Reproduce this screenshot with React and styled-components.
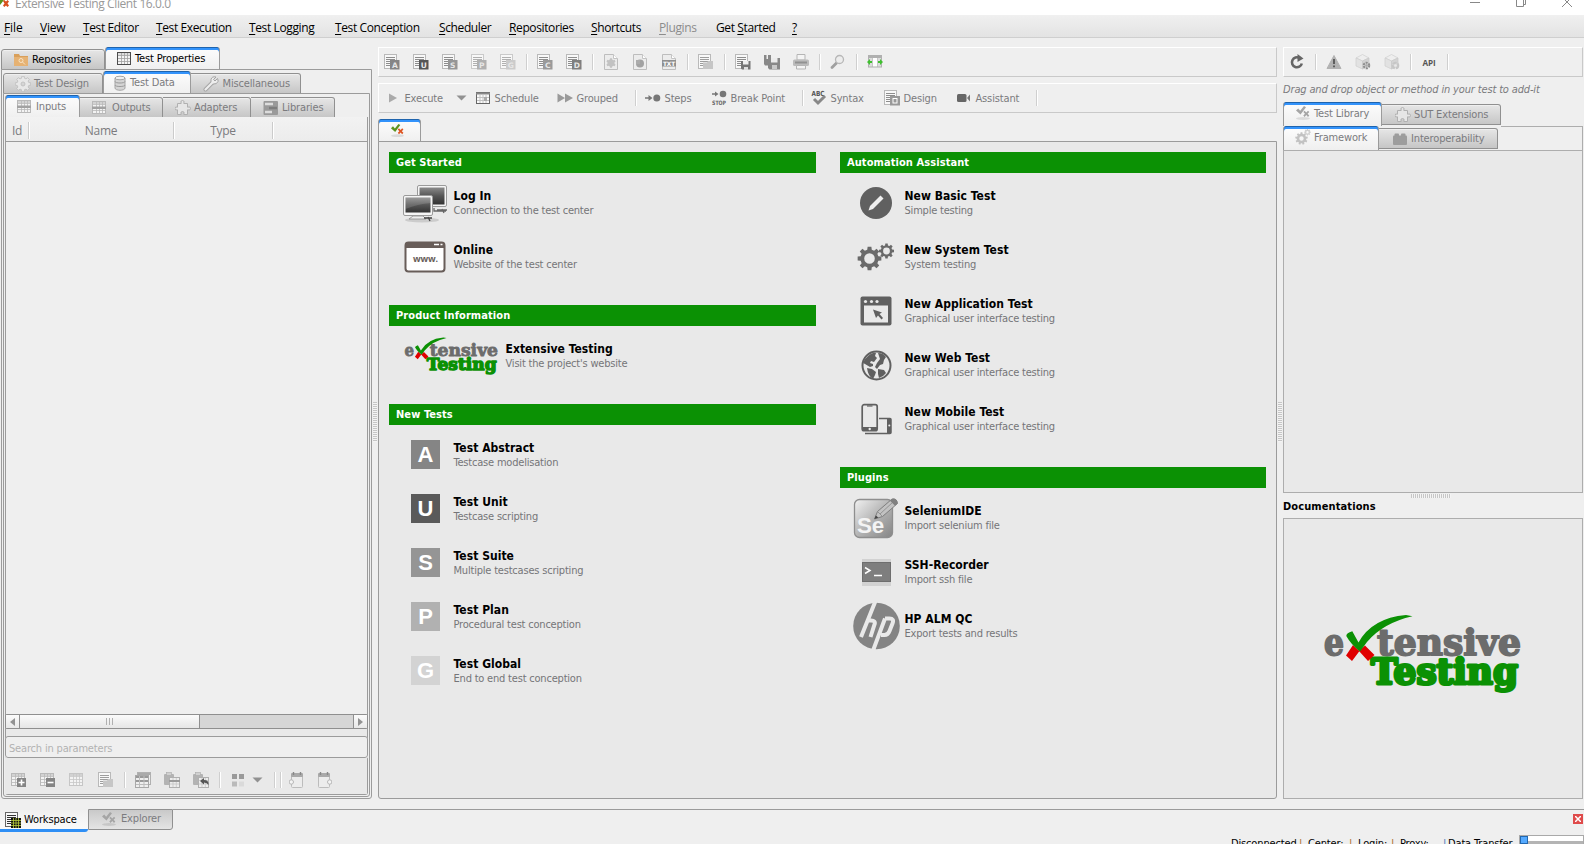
import React from "react";
import styled, { createGlobalStyle, css } from "styled-components";

const UI = '"DejaVu Sans Condensed", "DejaVu Sans", sans-serif';
const MENU = '"Open Sans", "Noto Sans", sans-serif';
const LINE = "#9b9b9b";
const GREEN = "#0b9104";

const Global = createGlobalStyle`
  * { box-sizing: border-box; }
  html, body { margin: 0; height: 844px; overflow: hidden; }
  body { background: #efefef; font: 11px/14px ${UI}; letter-spacing: -0.15px; color: #7b7b7e; white-space: nowrap; }
  svg { display: block; flex: none; }
`;

/* ---------- window chrome ---------- */
const Window = styled.div`
  width: 1584px; height: 844px; overflow: hidden; display: flex; flex-direction: column; background: #efefef;
`;
const TitleBar = styled.header`
  height: 15px; flex: none; background: #fff; display: flex; align-items: flex-start; overflow: hidden;
`;
const TitleText = styled.span`
  margin: -5px auto 0 6px; font: 12px/17px ${MENU}; letter-spacing: -0.4px; color: #999;
`;
const WindowButtons = styled.div`
  display: flex; gap: 34px; padding-right: 11px;
`;
const MenuBar = styled.nav`
  height: 23px; flex: none; display: flex; align-items: center; padding: 3px 0 0 4px;
  background: linear-gradient(#f0f0f0, #e3e3e3); border-bottom: 1px solid #cfcfcf;
`;
const MenuItem = styled.span`
  width: ${(p) => p.$w}px; flex: none; font: 12px/17px ${MENU}; letter-spacing: ${(p) => p.$ls || -0.38}px;
  color: ${(p) => (p.$off ? "#8c8c8c" : "#000")};
  u { text-underline-offset: 2px; }
`;
const Body = styled.main`
  height: 771px; flex: none; display: flex; padding: 9px 1px 10px 1px;
`;
const Column = styled.section`
  width: ${(p) => p.$w}px; flex: none; display: flex; flex-direction: column;
`;
const Gutter = styled.div`
  width: ${(p) => p.$w}px; flex: none; display: flex; align-items: center; justify-content: center; padding-bottom: 2px;
`;
const Grip = styled.div`
  ${(p) => p.$flat
    ? css`width: 40px; height: 4px; background: repeating-linear-gradient(90deg, #c6c6c6 0 1px, #f4f4f4 1px 2px);`
    : css`width: 4px; height: 40px; background: repeating-linear-gradient(#c6c6c6 0 1px, #f4f4f4 1px 2px);`}
`;

/* ---------- tabs ---------- */
const TabBox = styled.div`
  flex: none; display: flex; align-items: center; gap: ${(p) => p.$gap || 4}px;
  width: ${(p) => p.$w}px; padding-left: ${(p) => p.$pl}px;
  color: ${(p) => (p.$dark ? "#000" : "#7b7b7e")};
  ${(p) => p.$on
    ? css`
      height: 23px; margin-bottom: -1px; background: linear-gradient(#fdfdfd, #efefef);
      border: 1px solid ${LINE}; border-bottom: 0; border-top: 0; border-radius: 3px 3px 0 0;
      box-shadow: inset 0 1px #1f64ad, inset 0 3px #3393fb;`
    : css`
      height: 21px; margin-bottom: -1px; background: linear-gradient(#e6e6e6, #c6c6c6);
      border: 1px solid #909090; border-left-width: ${p.$first ? 1 : 0}px; border-radius: ${p.$first ? 3 : 0}px 3px 0 0;
      box-shadow: inset 0 1px #efefef;`}
  span { padding-top: 1px; }
`;
const TabBar = styled.div`
  height: 22px; flex: none; display: flex; align-items: flex-end;
  ${(p) => p.$tall && css`
    height: 24px;
    ${TabBox} { margin-bottom: 1px; }
    ${TabBox}:first-child { height: 24px; margin-bottom: 0; padding-bottom: 2px; }
  `}
`;
const Tab = ({ icon, children, ...rest }) => (
  <TabBox {...rest}>{icon}<span>{children}</span></TabBox>
);
const Frame = styled.div`
  flex: 1; min-height: 0; display: flex; flex-direction: column; border: 1px solid ${LINE}; padding: 1px;
  border-radius: 0 0 3px 3px; background: ${(p) => p.$bg || "#efefef"};
  ${(p) => p.$open && css`border-top: 0; padding: 0;`}
`;

/* ---------- parameters table ---------- */
const HeaderRow = styled.div`
  height: 25px; flex: none; display: flex; padding-top: 5px; border-bottom: 1px solid ${LINE};
  background: linear-gradient(#f2f2f2, #ececec);
`;
const HeaderCell = styled.span`
  width: ${(p) => p.$w}px; height: 17px; text-align: center; font: 12px/17px ${MENU}; letter-spacing: -0.25px;
  border-right: 1px solid #cbcbcb; box-shadow: 1px 0 #fff;
`;
const TableBody = styled.div`flex: 1; background: #efefef;`;
const ScrollBar = styled.div`
  height: 15px; flex: none; display: flex; border: 1px solid #8f8f8f; border-radius: 2px; background: #d6d6d6; margin: 0 -1px;
`;
const ScrollButton = styled.div`
  width: 14px; display: flex; align-items: center; justify-content: center; background: linear-gradient(#fbfbfb, #e8e8e8);
  border: 0 solid #8f8f8f; ${(p) => (p.$right ? "border-left-width: 1px; margin-left: auto;" : "border-right-width: 1px;")}
`;
const Thumb = styled.div`
  width: 180px; border-right: 1px solid #8f8f8f; background: linear-gradient(#fbfbfb, #e6e6e6);
  display: flex; align-items: center; justify-content: center; gap: 2px;
  i { width: 1px; height: 7px; background: #b0b0b0; }
`;
const Spacer = styled.div`height: 7px; flex: none; background: #e9e9e9;`;
const SearchField = styled.div`
  height: 22px; flex: none; margin: 0 -1px; padding: 5px 0 0 3px; color: #b2b2b2; border: 1px solid ${LINE}; border-radius: 3px;
  background: #efefef; letter-spacing: -0.17px; box-shadow: 0 1px #fff;
`;
const ParamTools = styled.div`
  height: 36px; flex: none; display: flex; align-items: center; background: #e9e9e9; padding: 8px 0 0 0; margin-left: -1px;
`;

/* ---------- toolbars ---------- */
const ToolBar = styled.div`
  height: 30px; flex: none; display: flex; align-items: center; margin-bottom: ${(p) => p.$mb || 0}px;
  border: 1px solid #c9c9c9; border-top-color: #fff; border-left-color: #fff;
  > :first-child { margin-left: ${(p) => (p.$indent ? p.$indent : -2)}px; }
`;
const ToolButton = styled.span`
  width: ${(p) => p.$w || 29}px; flex: none; display: flex; align-items: center; justify-content: center; gap: 6px;
`;
const TextButton = styled.span`
  width: ${(p) => p.$w}px; flex: none; display: flex; align-items: center; gap: 4px;
  em { font-style: normal; padding-top: 1px; }
`;
const Sep = styled.i`
  width: 2px; height: 16px; flex: none; margin: 0 ${(p) => p.$r ?? 2}px 0 4px; background: linear-gradient(90deg, #cfcfcf 50%, #fff 50%);
`;

/* ---------- welcome page ---------- */
const Welcome = styled(Frame)`
  flex-direction: row; gap: 24px; padding: 10px 9px 0 10px; align-items: flex-start;
`;
const WelcomeColumn = styled.div`width: ${(p) => p.$w}px; display: flex; flex-direction: column; gap: 21px;`;
const SectionHead = styled.h2`
  margin: 0 0 3px; height: 21px; padding: 4px 0 0 7px; background: ${GREEN}; color: #fff;
  font: bold 11px/14px ${UI}; letter-spacing: 0.08px;
`;
const Entry = styled.div`
  height: 54px; display: flex; gap: 3.5px; padding-left: 11px;
`;
const EntryIcon = styled.div`
  width: ${(p) => p.$w || 50}px; height: 54px; display: flex; align-items: center; justify-content: center;
`;
const EntryText = styled.div`
  padding-top: 12px; display: flex; flex-direction: column; color: #757578; letter-spacing: -0.2px;
  b { font: bold 12px/16px ${UI}; letter-spacing: 0.04px; color: #000; }
`;

/* ---------- right column ---------- */
const Hint = styled.p`
  margin: 0; height: 25px; padding-top: 6px; font-style: italic; letter-spacing: -0.15px;
`;
const Pane = styled.div`
  height: ${(p) => p.$h}px; flex: none; border: 1px solid #adadad; background: #e9e9e9; display: flex; align-items: center; justify-content: center;
  ${(p) => p.$logo && css`padding: 0 21px 9px 0;`}
`;
const TabTail = styled.div`
  flex: 1; align-self: stretch; margin-bottom: ${(p) => (p.$side ? 0 : -1)}px; border-bottom: ${(p) => (p.$side ? 0 : 1)}px solid #adadad;
  border-right: ${(p) => (p.$side ? 1 : 0)}px solid #adadad;
`;
const GripRow = styled.div`height: 7px; display: flex; align-items: center; justify-content: center; padding: 0 4px 2px 0;`;
const DocTitle = styled.h3`
  margin: 0; height: 18px; font: bold 11px/14px ${UI}; color: #000; letter-spacing: 0.1px;
`;

/* ---------- bottom ---------- */
const Dock = styled.footer`
  height: 26px; flex: none; display: flex; align-items: flex-start;
`;
const DockTab = styled.div`
  width: ${(p) => p.$w}px; display: flex; align-items: center; gap: ${(p) => (p.$on ? 3 : 4)}px;
  ${(p) => p.$on
    ? css`height: 23px; padding: 2px 0 0 5px; color: #000; background: linear-gradient(#efefef, #fafafa); border-bottom: 3px solid #2f8ff5; border-radius: 0 0 3px 0;`
    : css`height: 21px; padding: 0 0 1px 12px; background: linear-gradient(#c9c9c9, #e4e4e4); border: 1px solid #909090; border-radius: 0 0 3px 0;`}
`;
const DockRest = styled.div`
  flex: 1; height: 26px; border-top: 1px solid ${LINE}; display: flex; justify-content: flex-end; padding: 4px 1px 0 0;
`;
const CloseBox = styled.span`
  width: 10px; height: 10px; background: #df4b4b; display: flex; align-items: center; justify-content: center;
`;
const StatusBar = styled.div`
  height: 9px; flex: none; overflow: hidden; display: flex; padding-left: 1231px; color: #000;
`;
const Status = styled.span`width: ${(p) => p.$w}px; flex: none; padding-top: 2px; color: ${(p) => p.$c || "#000"};`;
const Progress = styled.div`
  flex: 1; height: 12px; border: 1px solid #a9a9a9; background: linear-gradient(#fff 5px, #b4b4b4 5px);
  &::before { content: ""; display: block; width: 6px; height: 6px; background: #55aaff; border: 1px solid #2268b0; }
`;

/* ---------- small icons, 16 x 16 ---------- */
const I = ({ s = 16, children, ...p }) => (
  <svg width={s} height={s} viewBox="0 0 16 16" {...p}>{children}</svg>
);
const Page = ({ c = "#b9b9b9", l = "#8d8d8d" }) => (
  <g>
    <rect x=".5" y=".5" width="12" height="14" fill="#f8f8f8" stroke={c} />
    <path d="M2 3.500h9M2 5.500h9M2 7.500h9M2 9.500h5M2 11.500h5" stroke={l} />
  </g>
);
const DocLetter = ({ ch, bg, soft }) => (
  <I>
    <Page c={soft ? "#cacaca" : "#b9b9b9"} l={soft ? "#b0b0b0" : "#8d8d8d"} />
    <rect x="6" y="6" width="9.500" height="9.500" fill={bg} />
    <text x="10.800" y="13.500" textAnchor="middle" fontFamily="DejaVu Sans" fontWeight="bold" fontSize="7.500" fill="#e6e6e6" letterSpacing="0">{ch}</text>
  </I>
);
const File = ({ children }) => (
  <I>
    <path d="M1.500.5h9l4 4v11h-13z" fill="#ececec" stroke="#bdbdbd" /><path d="M10.500 .5v4h4" fill="#fff" stroke="#c4c4c4" />{children}
  </I>
);
const gearPath = (cx, cy, r, n) => {
  const pts = [];
  for (let k = 0; k < n; k++) {
    [[-0.32, 0.76], [-0.2, 1], [0.2, 1], [0.32, 0.76]].forEach(([o, m]) => {
      const a = ((k + o) * 2 * Math.PI) / n;
      pts.push(`${(cx + Math.sin(a) * r * m).toFixed(2)} ${(cy - Math.cos(a) * r * m).toFixed(2)}`);
    });
  }
  return `M${pts.join("L")}Z`;
};
const circ = (cx, cy, r) => `M${cx - r} ${cy}a${r} ${r} 0 1 0 ${2 * r} 0a${r} ${r} 0 1 0 ${-2 * r} 0Z`;
const Gear = () => (
  <I><path fillRule="evenodd" d={gearPath(8, 8, 7.8, 8) + circ(8, 8, 2)} fill="#e8e8e8" stroke="#bcbcbc" strokeWidth=".8" /></I>
);
const Gears = () => (
  <I><path fillRule="evenodd" d={gearPath(6.5, 9.5, 6.3, 9) + circ(6.5, 9.5, 2.2)} fill="#c2c2c2" /><path fillRule="evenodd" d={gearPath(12.5, 3.2, 3.4, 8) + circ(12.5, 3.2, 1.2)} fill="#cfcfcf" /></I>
);
const Puzzle = () => (
  <I><path d="M2.500 3.500h3.700q-1.200-3 1.300-3t1.300 3h3.700v3.700q3-1.200 3 1.300t-3 1.300v4.700h-3.700q1.200-3-1.300-3t-1.300 3h-3.700v-4.700q-2.500 1-2.500-1.300t2.500-1.300z" fill="#e6e6e6" stroke="#b0b0b0" /></I>
);
const Table = ({ c = "#b9b9b9", bar, children, dark }) => (
  <I>
    <rect x=".5" y="1.500" width="13" height="12" fill="#f3f3f3" stroke={dark || c} />
    <rect x="1" y="2" width="12" height="2" fill={dark ? "#ddd" : "#d2d2d2"} />
    <path d="M1 4.500h12M1 7.500h12M1 10.500h12M4.500 2v11M7.500 2v11M10.500 2v11" stroke={c} strokeWidth=".8" />
    {bar && <rect x="0" y="6.500" width="14" height="2.500" fill="#a2a2a2" />}
    {children}
  </I>
);
const Badge = ({ minus }) => (
  <g><rect x="6" y="6" width="9" height="9" fill="#858585" /><path d={minus ? "M7.500 10.500h6" : "M7.500 10.500h6M10.500 7.500v6"} stroke="#fff" strokeWidth="1.600" /></g>
);
const CheckX = ({ g = "#5c9420", r = "#dd5522", s }) => (
  <I s={s}>
    <ellipse cx="8" cy="13.500" rx="7" ry="1.500" fill="#000" opacity=".1" />
    <path d="M1 5.500l2.200-2 2 2.300L9 1l2 1.200-5.500 7.300z" fill={g} />
    <path d="M8.300 7l1.300-1.300 1.700 1.700L13 5.700 14.300 7l-1.700 1.800 1.700 1.700-1.300 1.400-1.700-1.800-1.700 1.800-1.300-1.400L10 8.800z" fill={r} />
  </I>
);
const Clipboard = ({ children }) => (
  <I><rect x="0" y="2" width="10" height="11" rx="1" fill="#b3b3b3" /><rect x="2.500" y=".5" width="5" height="3" fill="#d0d0d0" stroke="#aaa" strokeWidth=".6" />
    <rect x="5.500" y="5.500" width="10" height="10" fill="#ededed" stroke="#b0b0b0" /><path d="M6 8.500h9M6 12h9M9 6v9M12.300 6v9" stroke="#c5c5c5" strokeWidth=".8" />{children}</I>
);
const Jar = ({ right }) => (
  <I><path d="M2.500 3.500h11v11q0 1-1 1h-9q-1 0-1-1z" fill="#ececec" stroke="#bcbcbc" /><rect x="2" y="1" width="12" height="4" rx="1" fill="#a9a9a9" /><path d="M4.500 0v3M11.500 0v3" stroke="#888" strokeWidth="1.400" />
    <circle cx={right ? 13.7 : 2.3} cy="10" r="2.200" fill="#f4f4f4" stroke="#b6b6b6" /></I>
);
const FolderDoc = () => (
  <I><Page l="#9d9d9d" /><path d="M5 8.500h4l1-1.500h5v8H5z" fill="#c6c6c6" /></I>
);
const Cube = ({ mark }) => (
  <I><path d="M1 4l6.500-3.500L14 4l-6.500 3z" fill="#eee" stroke="#cfcfcf" strokeWidth=".7" /><path d="M1 4l6.500 3v8L1 12z" fill="#e2e2e2" stroke="#cfcfcf" strokeWidth=".7" /><path d="M14 4L7.500 7v8l6.500-3z" fill="#d3d3d3" stroke="#c9c9c9" strokeWidth=".7" />
    <circle cx="11.500" cy="11.500" r="2.800" fill="none" stroke={mark ? "#8e8e8e" : "#c6c6c6"} strokeWidth="2" strokeDasharray={mark ? "2 1" : "4 1"} /><circle cx="11.500" cy="11.500" r="1.300" fill={mark ? "#aaa" : "#e8e8e8"} /></I>
);
const Caret = () => <svg width="11" height="6" viewBox="0 0 11 6"><path d="M.5.5h10L5.500 5.500z" fill="#919191" /></svg>;
const Arrow = ({ left }) => <svg width="5" height="8" viewBox="0 0 5 8"><path d={left ? "M5 0v8L0 4z" : "M0 0v8l5-4z"} fill="#929292" /></svg>;

/* ---------- product logo ---------- */
const Logo = ({ w }) => (
  <svg width={w} height={w * 0.4} viewBox="0 0 200 80" fontFamily="'DejaVu Serif', serif" fontWeight="bold" fontSize="35" letterSpacing="0">
    <g fill="#6c6c6c" stroke="#6c6c6c" strokeWidth="1.800" strokeLinejoin="round">
      <text x="1" y="41" textLength="20" lengthAdjust="spacingAndGlyphs">e</text>
      <text x="54" y="41" textLength="144" lengthAdjust="spacingAndGlyphs">tensive</text>
    </g>
    <text x="48" y="70" textLength="147" lengthAdjust="spacingAndGlyphs" fill={GREEN} stroke={GREEN} strokeWidth="3" strokeLinejoin="round">Testing</text>
    <path d="M30 31l6.500 6-7.500 10-6-5.500zM42 31.500l9.500 9.500-6.500 6-9-10z" fill="#e00000" />
    <path d="M23.300 22q0-3 6-4.700L35.500 28.500Q49 4 83 1l6.500 1.300Q60 9 44 28L37 37.500q-9-7-13.700-15.500z" fill={GREEN} />
  </svg>
);

/* ---------- welcome icons ---------- */
const Monitors = () => (
  <svg width="46" height="40" viewBox="0 0 46 40">
    <defs><linearGradient id="scr" x2="0" y2="1"><stop stopColor="#8a8a8a" /><stop offset=".5" stopColor="#555" /><stop offset="1" stopColor="#333" /></linearGradient></defs>
    <ellipse cx="20" cy="37" rx="17" ry="2.500" fill="#000" opacity=".12" />
    <path d="M32 25v3h12M35 27h10M40 26l2 4" fill="none" stroke="#666" strokeWidth="1.300" />
    <rect x="15.500" y="2.500" width="29" height="21" rx="1.500" fill="#f5f5f5" stroke="#9a9a9a" /><rect x="17.500" y="4.500" width="25" height="17" fill="url(#scr)" />
    <path d="M11 33h10l3 3H7z" fill="#eee" stroke="#8a8a8a" strokeWidth=".8" /><path d="M22 35h8M26 34l2 4" fill="none" stroke="#444" strokeWidth="1.300" />
    <rect x="1.500" y="12.500" width="29" height="20" rx="1.500" fill="#f5f5f5" stroke="#9a9a9a" /><rect x="3.500" y="14.500" width="25" height="15" fill="url(#scr)" />
    <path d="M3.500 26Q16 21 28.500 20v-5.500h-25z" fill="#fff" opacity=".14" />
  </svg>
);
const Browser = () => (
  <svg width="42" height="32" viewBox="0 0 42 32">
    <rect x="1.500" y="1.500" width="39" height="29" rx="3" fill="#fff" stroke="#685d59" strokeWidth="2" /><path d="M1 7V4q0-3 3-3h34q3 0 3 3v3z" fill="#685d59" />
    <path d="M30 3.500h5M36.500 3.500h2" stroke="#fff" strokeWidth="1.600" />
    <text x="21.500" y="21" textAnchor="middle" fontFamily="Open Sans" fontWeight="bold" fontSize="9" textLength="25" lengthAdjust="spacingAndGlyphs" fill="#685d59">www.</text>
  </svg>
);
const LetterTile = styled.span`
  width: 29px; height: 29px; margin: -1px 0 0 1px; background: ${(p) => p.$c}; color: #fff; text-align: center;
  font: bold 22px/29px "Liberation Sans", sans-serif; letter-spacing: 0;
`;
const Pencil = () => (
  <svg width="32" height="32" viewBox="0 0 32 32"><circle cx="16" cy="16" r="16" fill="#606060" /><path d="M20.500 8.500l3 3L13 22l-4.500 1.500L10 19z" fill="#eee" /></svg>
);
const BigGears = () => (
  <svg width="38" height="28" viewBox="0 0 38 28" fill="#6a6a6a" fillRule="evenodd">
    <path d={gearPath(12.5, 15.5, 12, 8) + circ(12.5, 15.5, 5.3)} /><path d={gearPath(29.5, 8, 7.6, 8) + circ(29.5, 8, 3.4)} />
  </svg>
);
const AppWindow = () => (
  <svg width="32" height="30" viewBox="0 0 32 30"><rect x=".5" y=".5" width="31" height="29" rx="2" fill="#606060" /><rect x="4" y="9.500" width="24" height="17" fill="#e9e9e9" />
    <g fill="#e9e9e9"><circle cx="5.500" cy="5.500" r="1.600" /><circle cx="11.500" cy="5.500" r="1.600" /><circle cx="17" cy="5.500" r="1.600" /></g><path d="M13 13.500l9 3-2.500 1.500 3.500 4-1.500 1.500-3.500-4-2 2.500z" fill="#606060" /></svg>
);
const Globe = () => (
  <svg width="31" height="31" viewBox="0 0 31 31"><circle cx="15.500" cy="15.500" r="14" fill="#e9e9e9" stroke="#606060" strokeWidth="2" />
    <path d="M7 6q5-4 8-3l-1 3 2 2-3 4-3-1-1 2 3 1v2l-3 1-5-3-2-1q1-4 5-7zM17 3q5 0 8 4l-2 3-1 4-3 1-3 4-2-2 2-4 3-4zM6 18l5 1 4 3-1 3-2 4q-5-3-6-11zM17 19l6 1 2 3q-3 4-7 5l-1-4z" fill="#606060" /></svg>
);
const Mobiles = () => (
  <svg width="32" height="32" viewBox="0 0 32 32"><rect x="2.200" y="1.700" width="15" height="26" rx="2" fill="#e9e9e9" stroke="#606060" strokeWidth="1.700" /><path d="M2 24h15v2.500q0 1.500-1.500 1.500h-12Q2 28 2 26.500z" fill="#606060" /><path d="M7 3h5.500" stroke="#606060" strokeWidth="1.200" /><circle cx="9.700" cy="26" r="1.200" fill="#eee" />
    <path d="M19 15.500h11q1 0 1 1v13q0 1-1 1H5" fill="none" stroke="#606060" strokeWidth="1.500" /><path d="M27 15h4v15h-4z" fill="#606060" /><circle cx="29.300" cy="22.500" r="1" fill="#eee" /></svg>
);
const Selenium = () => (
  <svg width="46" height="42" viewBox="0 0 46 42">
    <defs><linearGradient id="se" x2="1" y2="1"><stop stopColor="#f2f2f2" /><stop offset=".5" stopColor="#b5b5b5" /><stop offset="1" stopColor="#858585" /></linearGradient></defs>
    <rect x="1.500" y="2.500" width="38" height="38" rx="5" fill="url(#se)" stroke="#8e8e8e" strokeWidth="1.300" />
    <text x="4" y="36" fontFamily="Liberation Sans" fontWeight="bold" fontSize="22" textLength="27" lengthAdjust="spacingAndGlyphs" fill="#f4f4f4">Se</text>
    <path d="M21.500 22l3-7.500L39 2q5-1 5.500 4.500L29.500 19.500z" fill="#c2c2c2" stroke="#777" strokeWidth=".9" /><path d="M21.500 22l1.300-3.500 2.500 2z" fill="#444" /><path d="M25 15l4 4M27 17L40 5" stroke="#888" strokeWidth=".8" /><path d="M39 2q5-1 5.500 4.500l-2.500 2.200-5-5z" fill="#808080" />
  </svg>
);
const Ssh = () => (
  <svg width="29" height="27" viewBox="0 0 29 27"><rect width="29" height="27" fill="#d2d2d2" /><rect y="3" width="29" height="20" fill="#6e6e6e" /><rect x="1" y="4" width="27" height="18" fill="#7e7e7e" /><path d="M3 8.500l5 3-5 3M12 16.500h8" fill="none" stroke="#fff" strokeWidth="1.500" /></svg>
);
const Hp = () => (
  <svg width="47" height="48" viewBox="0 0 47 48"><circle cx="23.500" cy="24" r="23.300" fill="#848484" />
    <g fill="none" stroke="#e9e9e9" strokeWidth="4"><path d="M22.500-1L8 35M13.500 18.500H18q5 0 3.500 4L17.500 35" /><path d="M32 16.500L19.500 50M32 16.500h4.500q5 0 3 5L36.500 29q-1.500 4-5 4H28" /></g></svg>
);

const menus = [
  ["", "F", "ile", 36, -0.1], ["", "V", "iew", 43, -0.2], ["", "T", "est Editor", 73], ["", "T", "est Execution", 93], ["", "T", "est Logging", 86],
  ["", "T", "est Conception", 104], ["", "S", "cheduler", 70], ["", "R", "epositories", 82], ["", "S", "hortcuts", 68], ["", "P", "lugins", 57],
  ["Get ", "S", "tarted", 76], ["", "?", "", 20],
];

const Section = ({ title, items }) => (
  <section>
    <SectionHead>{title}</SectionHead>
    {items.map(([icon, name, text, w]) => (
      <Entry key={name}><EntryIcon $w={w}>{icon}</EntryIcon><EntryText><b>{name}</b><span>{text}</span></EntryText></Entry>
    ))}
  </section>
);
const tile = (l, c) => <LetterTile $c={c}>{l}</LetterTile>;
const gui = "Graphical user interface testing";

export default function App() {
  return (
    <Window>
      <Global />
      <TitleBar>
        <svg width="9" height="9" viewBox="0 0 9 9"><path d="M0 0h4L0 5z" fill="#5c9420" /><path d="M3 1l1.300-1L6 1.500 7.500 0 9 1.500 7.500 3.500 9 5.500 7.500 7 6 5.500 4.300 7 3 5.500l1.500-2z" fill="#d9501e" /></svg>
        <TitleText>Extensive Testing Client 16.0.0</TitleText>
        <WindowButtons>
          <svg width="12" height="9" viewBox="0 0 12 9"><path d="M1 2.500h10" stroke="#888" /></svg>
          <svg width="12" height="9" viewBox="0 0 12 9"><path d="M1.500-2v8.500h7V-2M8.500 4.500h2V-2" fill="none" stroke="#888" /></svg>
          <svg width="12" height="9" viewBox="0 0 12 9"><path d="M1 7L11-3M11 7L1-3" stroke="#888" /></svg>
        </WindowButtons>
      </TitleBar>
      <MenuBar>
        {menus.map(([a, u, b, w, ls]) => (
          <MenuItem key={u + b} $w={w} $ls={ls} $off={b === "lugins"}>{a}<u>{u}</u>{b}</MenuItem>
        ))}
      </MenuBar>

      <Body>
        <Column $w={371}>
          <TabBar>
            <Tab $first $dark $w={104} $pl={11} $gap={3} icon={<I><path d="M1 2h5l1 2h8v10H1z" fill="#d9a05b" /><path d="M1 5h14v9H1z" fill="#e6b273" /><circle cx="8" cy="8.500" r="2" fill="none" stroke="#f8e3c4" /><path d="M9.500 10l2.500 2.500" stroke="#f8e3c4" /></I>}>Repositories</Tab>
            <Tab $on $dark $w={115} $pl={11} $gap={2} icon={<Table dark="#4c4c4c" c="#9f9f9f" />}>Test Properties</Tab>
          </TabBar>
          <Frame>
            <TabBar>
              <Tab $first $w={100} $pl={11} $gap={3} icon={<Gear />}>Test Design</Tab>
              <Tab $on $w={88} $pl={8} $gap={2} icon={<I><path d="M3 3v10c0 3 10 3 10 0V3z" fill="#d5d5d5" stroke="#a5a5a5" /><ellipse cx="8" cy="3" rx="5" ry="1.800" fill="#f0f0f0" stroke="#a5a5a5" /><path d="M3 6.500c0 2 10 2 10 0M3 10c0 2 10 2 10 0" fill="none" stroke="#9a9a9a" /></I>}>Test Data</Tab>
              <Tab $w={110} $pl={12} $gap={3.5} icon={<I><path d="M2.500 13.500L10 6" stroke="#a4a4a4" strokeWidth="4" strokeLinecap="round" /><path d="M14.500 2.500L12 5 10.500 3.500 13 1q-4-1-5 2.500Q7 7 10 8q4 .5 5-2.500.3-1.500-.5-3z" fill="#ededed" stroke="#a4a4a4" /><path d="M2.500 13.500L10 6" stroke="#ededed" strokeWidth="2.200" strokeLinecap="round" /></I>}>Miscellaneous</Tab>
            </TabBar>
            <Frame>
              <TabBar>
                <Tab $on $w={75} $pl={11} $gap={3} icon={<Table bar />}>Inputs</Tab>
                <Tab $w={83} $pl={12} icon={<Table bar />}>Outputs</Tab>
                <Tab $w={88} $pl={12} $gap={3} icon={<Puzzle />}>Adapters</Tab>
                <Tab $w={84} $pl={12} $gap={3} icon={<I><rect x=".5" y="1" width="14.500" height="14" rx="1" fill="#9a9a9a" /><path d="M2 4h8M2 12h7" stroke="#dcdcdc" strokeWidth="2.400" /><path d="M6 8h8" stroke="#7d7d7d" strokeWidth="2.400" /></I>}>Libraries</Tab>
              </TabBar>
              <Frame $open>
                <HeaderRow>
                  <HeaderCell $w={23}>Id</HeaderCell><HeaderCell $w={145}>Name</HeaderCell><HeaderCell $w={99}>Type</HeaderCell>
                </HeaderRow>
                <TableBody />
                <ScrollBar>
                  <ScrollButton><Arrow left /></ScrollButton>
                  <Thumb><i /><i /><i /></Thumb>
                  <ScrollButton $right><Arrow /></ScrollButton>
                </ScrollBar>
                <Spacer />
                <SearchField>Search in parameters</SearchField>
                <ParamTools>
                  <ToolButton $w={28}><Table><Badge /></Table></ToolButton>
                  <ToolButton><Table><Badge minus /></Table></ToolButton>
                  <ToolButton><Table c="#c6c6c6" /></ToolButton>
                  <ToolButton><FolderDoc /></ToolButton>
                  <Sep />
                  <ToolButton><I><rect x="2.500" y=".5" width="13" height="12" fill="#eee" stroke="#b0b0b0" /><path d="M3 2h12" stroke="#aaa" strokeWidth="2" /><rect x=".5" y="3.500" width="13" height="12" fill="#eee" stroke="#a8a8a8" /><path d="M1 5h12M1 9h12" stroke="#999" strokeWidth="2" /><path d="M1 12.500h12M4.500 4v11M9 4v11" stroke="#bdbdbd" /></I></ToolButton>
                  <ToolButton><Clipboard><path d="M5 9h11" stroke="#9a9a9a" strokeWidth="2" /></Clipboard></ToolButton>
                  <ToolButton><Clipboard><path d="M7 9l4-3v2q5 0 4.500 5-1.500-2.500-4.500-2.500v2z" fill="#555" /></Clipboard></ToolButton>
                  <Sep />
                  <ToolButton $w={47}><I><path d="M2 2h5v5H2zM9 2h5v5H9z" fill="#9a9a9a" /><path d="M2 9.500h5v5H2z" fill="#bababa" /><path d="M9 9.500h5v5H9z" fill="#dadada" /></I><Caret /></ToolButton>
                  <Sep $r={0} /><Sep />
                  <ToolButton $w={26}><Jar /></ToolButton>
                  <ToolButton $w={28}><Jar right /></ToolButton>
                </ParamTools>
              </Frame>
            </Frame>
          </Frame>
        </Column>

        <Gutter $w={6}><Grip /></Gutter>

        <Column $w={899}>
          <ToolBar $mb={6}>
            <ToolButton><DocLetter ch="A" bg="#858585" /></ToolButton>
            <ToolButton><DocLetter ch="U" bg="#555" /></ToolButton>
            <ToolButton><DocLetter ch="S" bg="#969696" /></ToolButton>
            <ToolButton><DocLetter ch="P" bg="#b0b0b0" soft /></ToolButton>
            <ToolButton><DocLetter ch="G" bg="#cbcbcb" soft /></ToolButton>
            <Sep />
            <ToolButton><DocLetter ch="C" bg="#9a9a9a" /></ToolButton>
            <ToolButton><DocLetter ch="D" bg="#7f7f7f" /></ToolButton>
            <Sep />
            <ToolButton><File><path d={gearPath(8, 9, 4.8, 6)} fill="#c2c2c2" /></File></ToolButton>
            <ToolButton><File><circle cx="8" cy="9.500" r="4" fill="#a2a2a2" /><path d="M4 6h4v4H4z" fill="#ababab" /></File></ToolButton>
            <ToolButton><File><rect x="1" y="6" width="14" height="6.500" fill="#8f8f8f" /><text x="8" y="11.500" textAnchor="middle" fontFamily="DejaVu Sans" fontWeight="bold" fontSize="6" textLength="12" lengthAdjust="spacingAndGlyphs" fill="#fff">TXT</text></File></ToolButton>
            <Sep />
            <ToolButton><FolderDoc /></ToolButton>
            <Sep />
            <ToolButton><I><Page /><path d="M6 7h9.500v8.500H7l-1-1z" fill="#757575" /><path d="M8 7h5.500v3.500H8z" fill="#eee" /><path d="M9 13h4v3H9z" fill="#ddd" /></I></ToolButton>
            <ToolButton><I><path d="M0 1h2.500v4H4V1h3v3h9v11.500H5.500L4 14v-2.500H1L0 10z" fill="#888" /><path d="M7 4h6.500v4.500H7z" fill="#ececec" /><path d="M8 11h5v4H8z" fill="#c9c9c9" /></I></ToolButton>
            <ToolButton><I><path d="M4 .5h8V6H4z" fill="#f4f4f4" stroke="#b5b5b5" /><rect x="0" y="5.500" width="16" height="6.500" rx="1.500" fill="#bcbcbc" /><path d="M2 8.500h12" stroke="#929292" strokeWidth="2" /><path d="M3.500 11.500h9v3.500h-9z" fill="#f4f4f4" stroke="#b5b5b5" /></I></ToolButton>
            <Sep />
            <ToolButton><I><path d="M2 13.500L6.500 9" stroke="#a0a0a0" strokeWidth="2.800" strokeLinecap="round" /><circle cx="9.500" cy="5.500" r="4" fill="#ededed" stroke="#b7b7b7" strokeWidth="1.300" /></I></ToolButton>
            <Sep />
            <ToolButton><I><rect x="1" y="1" width="14" height="12.500" fill="#b0b0b0" /><path d="M2 4h3.500v8.500H2zM10.500 4H14v8.500h-3.500z" fill="#ddd" /><path d="M6 4h4v8.500H6z" fill="#fff" /><path d="M0 8l3-3v2h2v2H3v2zM16 8l-3-3v2h-2v2h2v2z" fill="#3fc02f" /></I></ToolButton>
          </ToolBar>
          <ToolBar $mb={6} $indent={5.5}>
            <TextButton $w={71}><I><path d="M4 3.500v9l8-4.500z" fill="#aaa" /></I><em>Execute</em></TextButton>
            <TextButton $w={19}><Caret /></TextButton>
            <TextButton $w={82}><I><rect x="1.500" y="2.500" width="13" height="11" fill="#fafafa" stroke="#666" /><path d="M1 3.500h14" stroke="#888" strokeWidth="2" /><path d="M2 7.500h12M2 10.500h12M5 5v8M8 5v8M11 5v8" stroke="#c2c2c2" /><path d="M9 7h3v4H9z" fill="#aaa" /></I><em>Schedule</em></TextButton>
            <TextButton $w={74}><I><path d="M.5 3.500v9l7.500-4.500zM8 3.500v9l8-4.500z" fill="#9a9a9a" /></I><em>Grouped</em></TextButton>
            <Sep $r={8} />
            <TextButton $w={66}><I><circle cx="11.800" cy="8" r="3.500" fill="#777" /><path d="M0 7.200h3.500V5L7.500 8l-4 3V8.800H0z" fill="#777" /></I><em>Steps</em></TextButton>
            <TextButton $w={87}><I><circle cx="12" cy="4" r="3.300" fill="#777" /><path d="M1 3.200h3V1.500L7.500 4 4 6.500V4.800H1z" fill="#777" /><text x="8" y="14.500" textAnchor="middle" fontFamily="DejaVu Sans" fontWeight="bold" fontSize="6" textLength="14" lengthAdjust="spacingAndGlyphs" letterSpacing="0" fill="#666">STOP</text></I><em>Break Point</em></TextButton>
            <Sep $r={7} />
            <TextButton $w={73}><I><text x="7" y="6" textAnchor="middle" fontFamily="DejaVu Sans" fontWeight="bold" fontSize="7" textLength="13" lengthAdjust="spacingAndGlyphs" letterSpacing="0" fill="#555">ABC</text><path d="M3 9l4 4 7-7" fill="none" stroke="#888" strokeWidth="3" /></I><em>Syntax</em></TextButton>
            <TextButton $w={72}><I><Page /><rect x="6" y="6" width="10" height="9.500" fill="#999" /><rect x="9" y="8.500" width="4" height="4.500" fill="none" stroke="#fff" /></I><em>Design</em></TextButton>
            <TextButton $w={76}><I><rect x="1" y="4" width="9.500" height="8" rx="1.500" fill="#666" /><path d="M11 8l3-3.500v7z" fill="#777" /></I><em>Assistant</em></TextButton>
            <Sep />
          </ToolBar>
          <TabBar>
            <Tab $on $w={43} $pl={11} icon={<CheckX s={15} />} />
          </TabBar>
          <Welcome $bg="#e9e9e9">
            <WelcomeColumn $w={427}>
              <Section title="Get Started" items={[[<Monitors />, "Log In", "Connection to the test center"], [<Browser />, "Online", "Website of the test center"]]} />
              <Section title="Product Information" items={[[<Logo w={95} />, "Extensive Testing", "Visit the project's website", 102]]} />
              <Section title="New Tests" items={[
                [tile("A", "#858585"), "Test Abstract", "Testcase modelisation"], [tile("U", "#5a5a5a"), "Test Unit", "Testcase scripting"],
                [tile("S", "#959595"), "Test Suite", "Multiple testcases scripting"], [tile("P", "#b1b1b1"), "Test Plan", "Procedural test conception"],
                [tile("G", "#d3d3d3"), "Test Global", "End to end test conception"]]} />
            </WelcomeColumn>
            <WelcomeColumn $w={426}>
              <Section title="Automation Assistant" items={[
                [<Pencil />, "New Basic Test", "Simple testing"], [<BigGears />, "New System Test", "System testing"],
                [<AppWindow />, "New Application Test", gui], [<Globe />, "New Web Test", gui], [<Mobiles />, "New Mobile Test", gui]]} />
              <Section title="Plugins" items={[
                [<Selenium />, "SeleniumIDE", "Import selenium file"], [<Ssh />, "SSH-Recorder", "Import ssh file"], [<Hp />, "HP ALM QC", "Export tests and results"]]} />
            </WelcomeColumn>
          </Welcome>
        </Column>

        <Gutter $w={6}><Grip /></Gutter>

        <Column $w={300}>
          <ToolBar>
            <ToolButton><I><path d="M12.800 9.500A5 5 0 1 1 10.500 4" fill="none" stroke="#666" strokeWidth="2.600" /><path d="M8.500 0l6 4.500-6 3.500z" fill="#666" /></I></ToolButton>
            <Sep />
            <ToolButton><I><path d="M8 1.500L15 14.500H1z" fill="#b2b2b2" stroke="#b2b2b2" strokeLinejoin="round" /><path d="M8 5v5M8 11.500v1.800" stroke="#555" strokeWidth="1.800" /></I></ToolButton>
            <ToolButton><Cube mark /></ToolButton>
            <ToolButton><Cube /></ToolButton>
            <Sep />
            <ToolButton><I><text x="8" y="11.500" textAnchor="middle" fontFamily="Open Sans" fontWeight="bold" fontSize="8.500" textLength="13" lengthAdjust="spacingAndGlyphs" fill="#555">API</text></I></ToolButton>
            <Sep />
          </ToolBar>
          <Hint>Drag and drop object or method in your test to add-it</Hint>
          <TabBar $tall>
            <Tab $on $w={99} $pl={11} $gap={3} icon={<CheckX g="#a5a5a5" r="#a5a5a5" />}>Test Library</Tab>
            <Tab $w={119} $pl={13} $gap={3} icon={<Puzzle />}>SUT Extensions</Tab>
            <TabTail />
          </TabBar>
          <TabBar $tall>
            <Tab $on $w={96} $pl={11} $gap={3} icon={<Gears />}>Framework</Tab>
            <Tab $w={119} $pl={13} $gap={3} icon={<I><rect x="1" y="4.500" width="14" height="9.500" rx="1" fill="#9d9d9d" /><rect x="2.500" y="2.500" width="4.500" height="3" rx="1" fill="#9d9d9d" /><rect x="9" y="2.500" width="4.500" height="3" rx="1" fill="#9d9d9d" /></I>}>Interoperability</Tab>
            <TabTail $side />
          </TabBar>
          <Pane $h={343} />
          <GripRow><Grip $flat /></GripRow>
          <DocTitle>Documentations</DocTitle>
          <Pane $h={281} $logo><Logo w={200} /></Pane>
        </Column>
      </Body>

      <Dock>
        <DockTab $on $w={88}><I><Page c="#666" l="#333" /><rect x="6" y="6" width="10" height="10" fill="#111" /><path d="M6 8.500h10M6 11h10M6 13.500h10M8.500 6v10M11 6v10M13.500 6v10" stroke="#b9cf3a" strokeWidth=".8" /></I>Workspace</DockTab>
        <DockTab $w={85}><CheckX g="#a5a5a5" r="#a5a5a5" />Explorer</DockTab>
        <DockRest><CloseBox><svg width="6" height="6" viewBox="0 0 6 6"><path d="M0 0l6 6M6 0L0 6" stroke="#fff" strokeWidth="1.500" /></svg></CloseBox></DockRest>
      </Dock>
      <StatusBar>
        <Status $w={68}>Disconnected</Status><Status $w={9} $c="#a86a24">|</Status><Status $w={41}>Center:</Status><Status $w={9} $c="#a86a24">|</Status>
        <Status $w={33}>Login:</Status><Status $w={9} $c="#a86a24">|</Status><Status $w={43}>Proxy:</Status><Status $w={5} $c="#3a78b8">|</Status><Status $w={71}>Data Transfer</Status>
        <Progress />
      </StatusBar>
    </Window>
  );
}
